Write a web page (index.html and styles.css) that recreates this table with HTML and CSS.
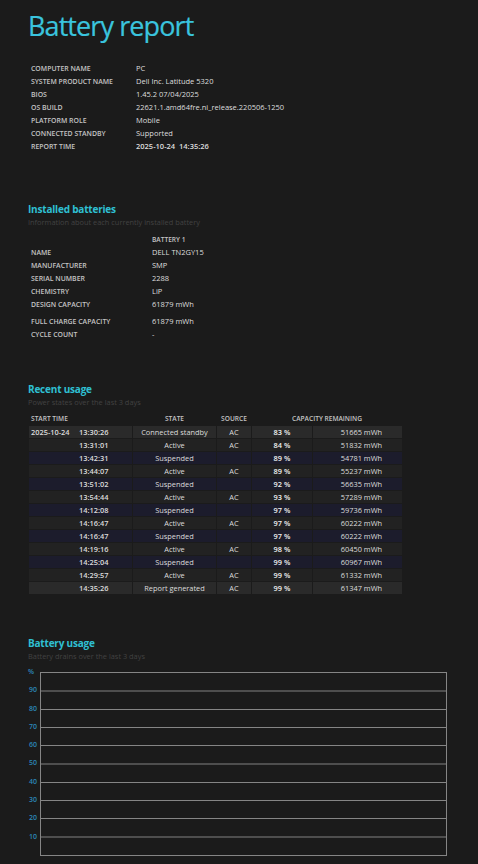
FILE: index.html
```html
<!DOCTYPE html>
<html lang="en">
<head>
<meta charset="utf-8">
<title>Battery report</title>
<link rel="stylesheet" href="styles.css">
</head>
<body>
<div class="page">
  <h1 class="title">Battery report</h1>

  <table class="kv info">
    <tr><td class="label">Computer name</td><td class="value">PC</td></tr>
    <tr><td class="label">System product name</td><td class="value">Dell Inc. Latitude 5320</td></tr>
    <tr><td class="label">BIOS</td><td class="value">1.45.2 07/04/2025</td></tr>
    <tr><td class="label">OS build</td><td class="value">22621.1.amd64fre.ni_release.220506-1250</td></tr>
    <tr><td class="label">Platform role</td><td class="value">Mobile</td></tr>
    <tr><td class="label">Connected standby</td><td class="value">Supported</td></tr>
    <tr><td class="label">Report time</td><td class="value strong">2025-10-24&nbsp;&nbsp;14:35:26</td></tr>
  </table>

  <section class="section batteries">
    <h2 class="heading">Installed batteries</h2>
    <p class="sub">Information about each currently installed battery</p>
    <table class="kv batt">
      <tr><td class="label"></td><td class="colhead">Battery 1</td></tr>
      <tr><td class="label">Name</td><td class="value">DELL TN2GY15</td></tr>
      <tr><td class="label">Manufacturer</td><td class="value">SMP</td></tr>
      <tr><td class="label">Serial number</td><td class="value">2288</td></tr>
      <tr><td class="label">Chemistry</td><td class="value">LiP</td></tr>
      <tr><td class="label">Design capacity</td><td class="value">61879 mWh</td></tr>
      <tr class="gap"><td class="label">Full charge capacity</td><td class="value">61879 mWh</td></tr>
      <tr><td class="label">Cycle count</td><td class="value">-</td></tr>
    </table>
  </section>

  <section class="section recent">
    <h2 class="heading">Recent usage</h2>
    <p class="sub">Power states over the last 3 days</p>
    <table class="usage">
      <thead>
        <tr>
          <th class="c-time">Start time</th>
          <th class="c-state">State</th>
          <th class="c-src">Source</th>
          <th class="c-cap" colspan="2">Capacity remaining</th>
        </tr>
      </thead>
      <tbody>
        <tr class="hl"><td class="c-time"><span class="date">2025-10-24</span><span class="time">13:30:26</span></td><td class="c-state">Connected standby</td><td class="c-src">AC</td><td class="c-pct">83 %</td><td class="c-mwh">51665 mWh</td></tr>
        <tr class="active"><td class="c-time"><span class="date"></span><span class="time">13:31:01</span></td><td class="c-state">Active</td><td class="c-src">AC</td><td class="c-pct">84 %</td><td class="c-mwh">51832 mWh</td></tr>
        <tr class="susp"><td class="c-time"><span class="date"></span><span class="time">13:42:31</span></td><td class="c-state">Suspended</td><td class="c-src"></td><td class="c-pct">89 %</td><td class="c-mwh">54781 mWh</td></tr>
        <tr class="active"><td class="c-time"><span class="date"></span><span class="time">13:44:07</span></td><td class="c-state">Active</td><td class="c-src">AC</td><td class="c-pct">89 %</td><td class="c-mwh">55237 mWh</td></tr>
        <tr class="susp"><td class="c-time"><span class="date"></span><span class="time">13:51:02</span></td><td class="c-state">Suspended</td><td class="c-src"></td><td class="c-pct">92 %</td><td class="c-mwh">56635 mWh</td></tr>
        <tr class="active"><td class="c-time"><span class="date"></span><span class="time">13:54:44</span></td><td class="c-state">Active</td><td class="c-src">AC</td><td class="c-pct">93 %</td><td class="c-mwh">57289 mWh</td></tr>
        <tr class="susp"><td class="c-time"><span class="date"></span><span class="time">14:12:08</span></td><td class="c-state">Suspended</td><td class="c-src"></td><td class="c-pct">97 %</td><td class="c-mwh">59736 mWh</td></tr>
        <tr class="active"><td class="c-time"><span class="date"></span><span class="time">14:16:47</span></td><td class="c-state">Active</td><td class="c-src">AC</td><td class="c-pct">97 %</td><td class="c-mwh">60222 mWh</td></tr>
        <tr class="susp"><td class="c-time"><span class="date"></span><span class="time">14:16:47</span></td><td class="c-state">Suspended</td><td class="c-src"></td><td class="c-pct">97 %</td><td class="c-mwh">60222 mWh</td></tr>
        <tr class="active"><td class="c-time"><span class="date"></span><span class="time">14:19:16</span></td><td class="c-state">Active</td><td class="c-src">AC</td><td class="c-pct">98 %</td><td class="c-mwh">60450 mWh</td></tr>
        <tr class="susp"><td class="c-time"><span class="date"></span><span class="time">14:25:04</span></td><td class="c-state">Suspended</td><td class="c-src"></td><td class="c-pct">99 %</td><td class="c-mwh">60967 mWh</td></tr>
        <tr class="active"><td class="c-time"><span class="date"></span><span class="time">14:29:57</span></td><td class="c-state">Active</td><td class="c-src">AC</td><td class="c-pct">99 %</td><td class="c-mwh">61332 mWh</td></tr>
        <tr class="hl"><td class="c-time"><span class="date"></span><span class="time">14:35:26</span></td><td class="c-state">Report generated</td><td class="c-src">AC</td><td class="c-pct">99 %</td><td class="c-mwh">61347 mWh</td></tr>
      </tbody>
    </table>
  </section>

  <section class="section usagechart">
    <h2 class="heading">Battery usage</h2>
    <p class="sub">Battery drains over the last 3 days</p>
    <div class="chart">
      <div class="axis">
        <span class="tick">%</span>
        <span class="tick">90</span>
        <span class="tick">80</span>
        <span class="tick">70</span>
        <span class="tick">60</span>
        <span class="tick">50</span>
        <span class="tick">40</span>
        <span class="tick">30</span>
        <span class="tick">20</span>
        <span class="tick">10</span>
      </div>
      <div class="plot">
        <div class="band dim"></div>
        <div class="band"></div>
        <div class="band"></div>
        <div class="band"></div>
        <div class="band dim"></div>
        <div class="band"></div>
        <div class="band"></div>
        <div class="band"></div>
        <div class="band dim"></div>
        <div class="band last"></div>
      </div>
    </div>
  </section>
</div>
</body>
</html>
```

FILE: styles.css
```css
html, body {
  margin: 0;
  padding: 0;
  background: #1b1b1b;
}

body {
  font-family: "Open Sans", "Noto Sans", "DejaVu Sans", sans-serif;
  color: #dcdcdc;
}

.page {
  padding: 12px 0 0 28px;
  width: 450px;
}

.title {
  margin: 0;
  font-size: 27px;
  line-height: 28px;
  font-weight: 400;
  color: #3ac4de;
  letter-spacing: -0.9px;
  -webkit-text-stroke: 0.2px #3ac4de;
}

.kv {
  border-collapse: collapse;
}

.kv td {
  padding: 0 0 0 3px;
  height: 13px;
  line-height: 13px;
  white-space: nowrap;
  vertical-align: middle;
}

.info {
  margin-top: 22px;
}

.info .label {
  width: 102px;
}

.batt .label {
  width: 118px;
}

.label {
  font-size: 6.9px;
  font-weight: 600;
  text-transform: uppercase;
  color: #c4c4c4;
}

.value {
  font-size: 7.5px;
  color: #dedede;
}

.strong {
  font-weight: 600;
}

.colhead {
  font-size: 6.6px;
  font-weight: 600;
  text-transform: uppercase;
  color: #c4c4c4;
}

.batt tr.gap td {
  padding-top: 4px;
}

.batt {
  margin-top: 5px;
}

.section {
  margin-top: 50px;
}

.recent, .usagechart {
  margin-top: 42px;
}

.heading {
  margin: 0;
  font-size: 10px;
  line-height: 13px;
  font-weight: 700;
  color: #2fc0d3;
  letter-spacing: -0.2px;
}

.sub {
  margin: 0;
  font-size: 7.4px;
  line-height: 12px;
  color: #424242;
}

/* Recent usage table */
.usage {
  margin-top: 4px;
  border-collapse: separate;
  border-spacing: 1px;
  font-size: 7.4px;
  color: #dcdcdc;
}

.usage th {
  font-size: 6.6px;
  font-weight: 600;
  text-transform: uppercase;
  color: #c4c4c4;
  height: 12px;
  line-height: 12px;
  padding: 0;
  white-space: nowrap;
}

.usage td {
  height: 12px;
  line-height: 12px;
  padding: 0;
  white-space: nowrap;
}

.usage th.c-time {
  text-align: left;
  padding-left: 2px;
}

.c-time {
  width: 101px;
  padding-left: 2px;
}

.usage td.c-time {
  padding-left: 2px;
  font-weight: 600;
}

.date {
  display: inline-block;
  width: 48px;
}

.c-state {
  width: 83px;
  text-align: center;
}

.c-src {
  width: 34px;
  text-align: center;
}

.c-pct {
  width: 60px;
  text-align: center;
  font-weight: 600;
  color: #f0f0f0;
}

.c-mwh {
  width: 69px;
  padding-right: 20px !important;
  text-align: right;
}

.usage th.c-cap {
  text-align: center;
}

.usage tr.hl td {
  background: #2a2a2a;
}

.usage tr.active td {
  background: #222222;
}

.usage tr.susp td {
  background: #1c1c2c;
}

/* Battery usage chart */
.chart {
  margin-top: 10px;
  display: flex;
}

.axis {
  width: 12px;
  display: flex;
  flex-direction: column;
}

.tick {
  height: 18.3px;
  font-size: 7px;
  line-height: 10px;
  margin-top: -5px;
  margin-bottom: 5px;
  padding-right: 3px;
  text-align: right;
  color: #2b87b8;
  font-weight: 600;
}

.tick:first-child {
  text-align: left;
  padding-left: 0;
}

.plot {
  width: 405px;
  height: 182px;
  border: 1px solid #858585;
  display: flex;
  flex-direction: column;
}

.band {
  flex: 1;
  border-bottom: 1px solid #858585;
}

.band.dim {
  border-bottom: 2px solid #4e4e4e;
}

.band.last {
  border-bottom: none;
}
```
